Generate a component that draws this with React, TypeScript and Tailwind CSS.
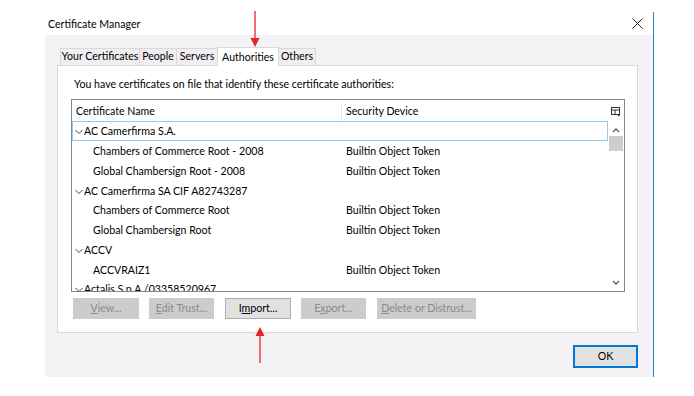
import React from 'react';

const font = { fontFamily: 'Lato, "Noto Sans", sans-serif' };

const tabs = [
  { label: 'Your Certificates', w: 'w-[80px]' },
  { label: 'People', w: 'w-[38px]' },
  { label: 'Servers', w: 'w-[42px]' },
  { label: 'Authorities', w: 'w-[62px]', active: true },
  { label: 'Others', w: 'w-[38px]' },
];

type Row = { name: string; device?: string; group?: boolean };

const rows: Row[] = [
  { name: 'AC Camerfirma S.A.', group: true },
  { name: 'Chambers of Commerce Root - 2008', device: 'Builtin Object Token' },
  { name: 'Global Chambersign Root - 2008', device: 'Builtin Object Token' },
  { name: 'AC Camerfirma SA CIF A82743287', group: true },
  { name: 'Chambers of Commerce Root', device: 'Builtin Object Token' },
  { name: 'Global Chambersign Root', device: 'Builtin Object Token' },
  { name: 'ACCV', group: true },
  { name: 'ACCVRAIZ1', device: 'Builtin Object Token' },
  { name: 'Actalis S.p.A./03358520967', group: true },
];

const Chevron = () => (
  <svg width="8" height="6" viewBox="0 0 8 6" className="mr-[1px] shrink-0">
    <path d="M0.5 1 L4 4.5 L7.5 1" fill="none" stroke="#444" strokeWidth="1" />
  </svg>
);

const Arrow = ({ up }: { up?: boolean }) => (
  <svg width="10" height="36" viewBox="0 0 10 36">
    {up ? (
      <>
        <path d="M5 0 L9.5 9 L0.5 9 Z" fill="#e3262b" />
        <line x1="5" y1="8" x2="5" y2="36" stroke="#e3262b" strokeWidth="1.3" />
      </>
    ) : (
      <>
        <line x1="5" y1="0" x2="5" y2="28" stroke="#e3262b" strokeWidth="1.3" />
        <path d="M0.5 27 L9.5 27 L5 36 Z" fill="#e3262b" />
      </>
    )}
  </svg>
);

const Btn = ({
  w,
  pre,
  key1,
  post,
  enabled,
}: {
  w: string;
  pre: string;
  key1: string;
  post: string;
  enabled?: boolean;
}) => (
  <div
    className={`${w} h-[21px] flex items-center justify-center whitespace-nowrap text-[10.6px] ${
      enabled
        ? 'bg-[#e1e1e1] border border-[#adadad] text-black'
        : 'bg-[#cccccc] border border-[#cccccc] text-[#8a8a8a]'
    }`}
  >
    <span>
      {pre}
      <span className="underline">{key1}</span>
      {post}
    </span>
  </div>
);

export default function App() {
  return (
    <div className="relative w-[694px] h-[396px] bg-white overflow-hidden text-black" style={font}>
      {/* window */}
      <div className="absolute left-[45px] top-[12px] w-[609px] h-[365px] border-r border-[#1883d7] flex flex-col">
        <div className="h-[23px] bg-white flex items-center justify-between pl-[3px] pr-[10px]">
          <span className="text-[10.6px] pt-[3px]">Certificate Manager</span>
          <svg width="11" height="11" viewBox="0 0 11 11">
            <path d="M0.5 0.5 L10.5 10.5 M10.5 0.5 L0.5 10.5" stroke="#222" strokeWidth="1" />
          </svg>
        </div>
        <div className="flex-1 bg-[#f4f2f4] pl-[12px] pr-[15px] flex flex-col">
          {/* tabs */}
          <div className="h-[30px] flex items-end pl-[3px]">
            {tabs.map((t) =>
              t.active ? (
                <div
                  key={t.label}
                  className={`${t.w} h-[19px] -mb-[1px] -ml-[1px] relative z-10 bg-white border border-b-0 border-[#d9d9d9] text-[10.6px] whitespace-nowrap flex items-start justify-center pt-[2px]`}
                >
                  {t.label}
                </div>
              ) : (
                <div
                  key={t.label}
                  className={`${t.w} h-[17px] bg-[#f0eef0] border border-b-0 border-[#d9d9d9] -ml-[1px] first:ml-0 text-[10.6px] whitespace-nowrap flex items-center justify-center`}
                >
                  {t.label}
                </div>
              )
            )}
          </div>
          {/* panel */}
          <div className="w-[581px] h-[268px] bg-white border border-[#d9d9d9] flex flex-col">
            <div className="h-[33px] pl-[16px] pt-[11px] text-[10.6px] leading-[14px] whitespace-nowrap">
              You have certificates on file that identify these certificate authorities:
            </div>
            <div className="ml-[13px] w-[554px] h-[193px] border border-[#828790] flex flex-col overflow-hidden">
              <div className="h-[21px] shrink-0 flex items-center text-[10.6px] pt-[2px]">
                <div className="w-[270px] pl-[4px] h-full flex items-center border-r border-[#e5e5e5]">Certificate Name</div>
                <div className="w-[265px] pl-[4px]">Security Device</div>
                <div className="w-[17px] flex justify-center">
                  <svg width="10" height="10" viewBox="0 0 10 10">
                    <rect x="0.5" y="0.5" width="8" height="7" fill="none" stroke="#333" />
                    <line x1="0.5" y1="3" x2="8.5" y2="3" stroke="#333" />
                    <line x1="4" y1="3" x2="4" y2="7.5" stroke="#333" />
                    <path d="M6 7.5 L9.5 7.5 L7.75 9.5 Z" fill="#333" />
                  </svg>
                </div>
              </div>
              <div className="flex flex-1 min-h-0">
                <div className="w-[536px] flex flex-col">
                  {rows.map((r, i) => (
                    <div
                      key={r.name}
                      className={`h-[19.75px] shrink-0 flex items-center pt-[3px] text-[10.6px] whitespace-nowrap ${
                        i === 0 ? 'border border-[#99c9ef]' : 'border border-transparent'
                      }`}
                    >
                      {r.group ? (
                        <div className="flex items-center pl-[2px]">
                          <Chevron />
                          <span>{r.name}</span>
                        </div>
                      ) : (
                        <>
                          <div className="w-[273px] pl-[20px]">{r.name}</div>
                          <div>{r.device}</div>
                        </>
                      )}
                    </div>
                  ))}
                </div>
                <div className="w-[16px] flex flex-col items-center">
                  <svg width="8" height="6" viewBox="0 0 8 6" className="mt-[6px]">
                    <path d="M1 5 L4 2 L7 5" fill="none" stroke="#606060" strokeWidth="1.3" />
                  </svg>
                  <div className="w-[14px] h-[15px] bg-[#cdcdcd] mt-[3px]" />
                  <div className="flex-1" />
                  <svg width="8" height="6" viewBox="0 0 8 6" className="mb-[5px]">
                    <path d="M1 1 L4 4 L7 1" fill="none" stroke="#606060" strokeWidth="1.3" />
                  </svg>
                </div>
              </div>
            </div>
            <div className="flex pl-[15px] mt-[6px]">
              <Btn w="w-[66px]" pre="" key1="V" post="iew..." />
              <div className="w-[10px]" />
              <Btn w="w-[65px]" pre="" key1="E" post="dit Trust..." />
              <div className="w-[11px]" />
              <Btn w="w-[66px]" pre="I" key1="m" post="port..." enabled />
              <div className="w-[10px]" />
              <Btn w="w-[65px]" pre="E" key1="x" post="port..." />
              <div className="w-[11px]" />
              <Btn w="w-[99px]" pre="" key1="D" post="elete or Distrust..." />
            </div>
          </div>
          <div className="flex justify-end mt-[12px]">
            <div className="w-[65px] h-[23px] bg-[#e1e1e1] border-2 border-[#0078d7] flex items-center justify-center text-[10.6px]">
              OK
            </div>
          </div>
        </div>
      </div>
      {/* annotation arrows */}
      <div className="absolute left-[250px] top-[11px]">
        <Arrow />
      </div>
      <div className="absolute left-[255px] top-[327px]">
        <Arrow up />
      </div>
    </div>
  );
}
